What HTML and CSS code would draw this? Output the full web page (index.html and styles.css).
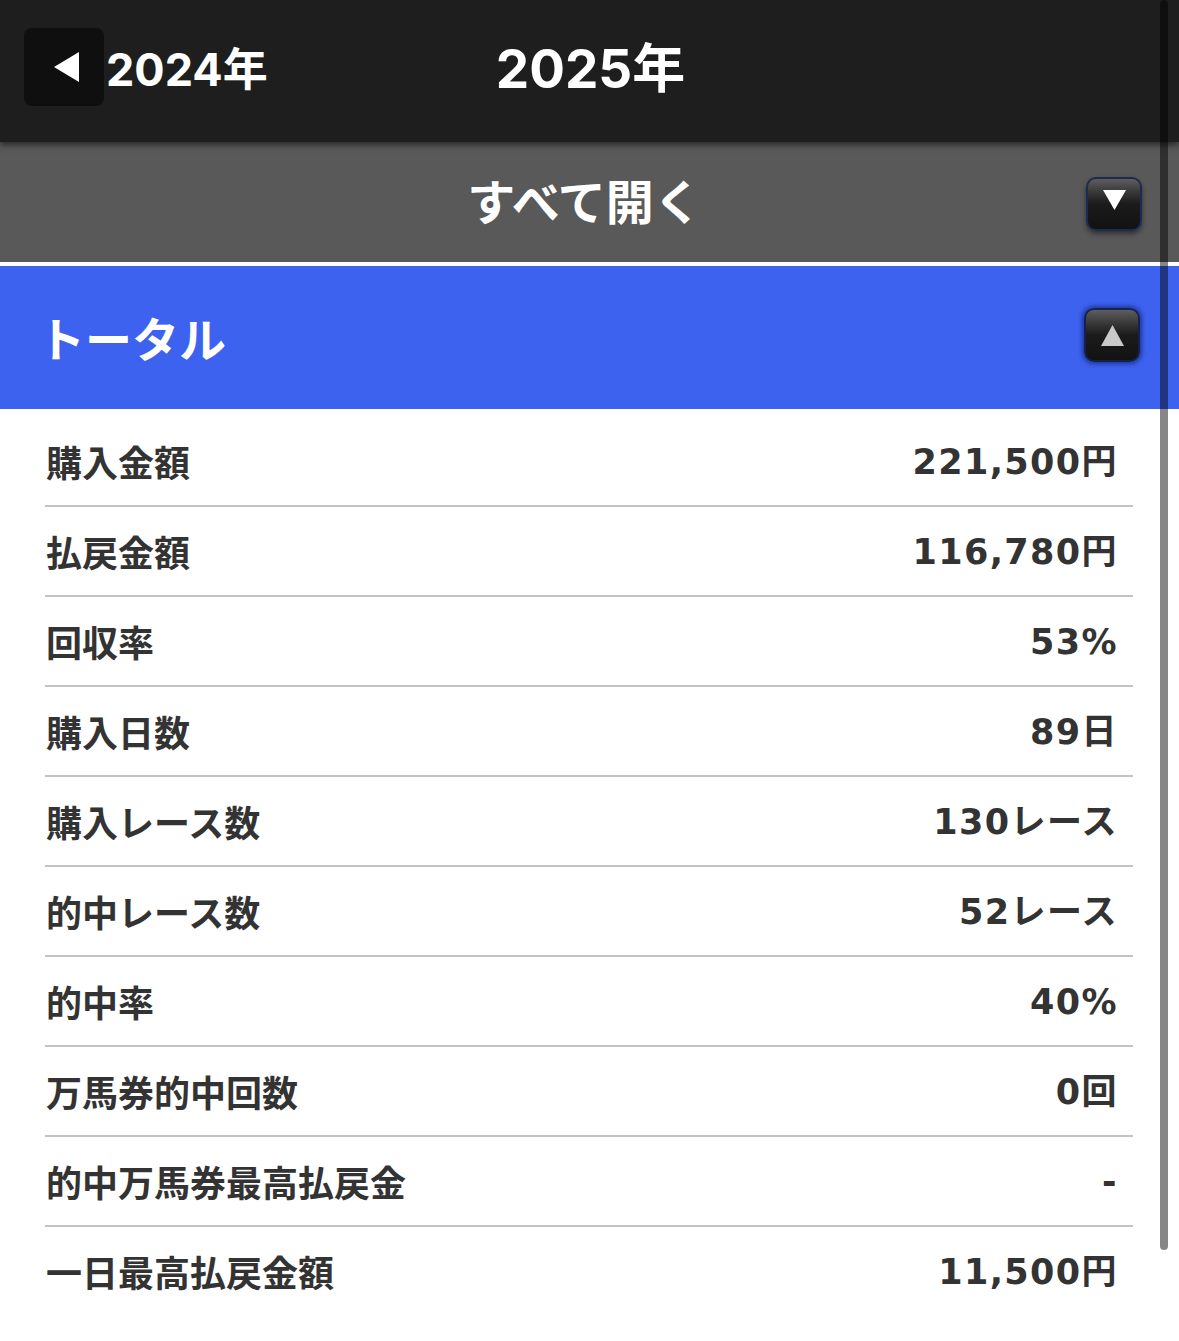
FILE: index.html
```html
<!DOCTYPE html>
<html lang="ja">
<head>
<meta charset="utf-8">
<title>収支 2025年</title>
<link rel="stylesheet" href="styles.css">
</head>
<body>
<div class="page">
  <header class="topbar">
    <div class="prev">
      <button class="back-btn" aria-label="前の年">
        <svg width="25" height="30" viewBox="0 0 25 30"><polygon points="0,15 25,0 25,30" fill="#fff"/></svg>
      </button>
      <span class="prev-year">2024年</span>
    </div>
    <h1 class="year">2025年</h1>
    <div></div>
  </header>

  <div class="expand-bar">
    <span class="expand-label">すべて開く</span>
    <span class="toggle toggle-down">
      <svg width="23" height="20" viewBox="0 0 23 20"><polygon points="0,0 23,0 11.5,20" fill="#fff"/></svg>
    </span>
  </div>

  <div class="section-head">
    <h2 class="section-title">トータル</h2>
    <span class="toggle toggle-up">
      <svg width="23" height="21" viewBox="0 0 23 21"><polygon points="11.5,0 23,21 0,21" fill="#c9c9c9"/></svg>
    </span>
  </div>

  <ul class="stats">
    <li class="row"><span class="label">購入金額</span><span class="value">221,500円</span></li>
    <li class="row"><span class="label">払戻金額</span><span class="value">116,780円</span></li>
    <li class="row"><span class="label">回収率</span><span class="value">53%</span></li>
    <li class="row"><span class="label">購入日数</span><span class="value">89日</span></li>
    <li class="row"><span class="label">購入レース数</span><span class="value">130レース</span></li>
    <li class="row"><span class="label">的中レース数</span><span class="value">52レース</span></li>
    <li class="row"><span class="label">的中率</span><span class="value">40%</span></li>
    <li class="row"><span class="label">万馬券的中回数</span><span class="value">0回</span></li>
    <li class="row"><span class="label">的中万馬券最高払戻金</span><span class="value">-</span></li>
    <li class="row"><span class="label">一日最高払戻金額</span><span class="value">11,500円</span></li>
  </ul>

  <div class="scrollbar"></div>
</div>
</body>
</html>
```

FILE: styles.css
```css
html, body {
  margin: 0;
  padding: 0;
  background: #fff;
}

.page {
  position: relative;
  width: 1179px;
  min-height: 1341px;
  overflow: hidden;
  font-family: "Noto Sans CJK JP", sans-serif;
}

.topbar {
  position: relative;
  z-index: 2;
  height: 142px;
  background: #1e1e1e;
  display: grid;
  grid-template-columns: 1fr auto 1fr;
  align-items: center;
  box-shadow: 0 3px 6px rgba(0, 0, 0, 0.55);
}

.prev {
  display: flex;
  align-items: center;
  padding-left: 24px;
  margin-top: -9px;
}

.back-btn {
  width: 80px;
  height: 78px;
  border: 0;
  padding: 0 0 0 4px;
  border-radius: 8px;
  background: #0f0f0f;
  display: flex;
  align-items: center;
  justify-content: center;
}

.prev-year {
  margin-left: 2px;
  color: #fff;
  font-family: "Inter", "Noto Sans CJK JP", sans-serif;
  font-weight: 700;
  font-size: 45px;
  line-height: 1;
  margin-top: 6px;
}

.year {
  margin: 0;
  color: #fff;
  font-family: "Inter", "Noto Sans CJK JP", sans-serif;
  font-weight: 700;
  font-size: 53px;
  line-height: 1;
  margin-top: -4px;
  margin-left: 2px;
}

.expand-bar {
  position: relative;
  height: 120px;
  background: #595959;
  display: flex;
  align-items: center;
  justify-content: center;
}

.expand-label {
  color: #fff;
  font-weight: 700;
  font-size: 48px;
  line-height: 1;
  margin-left: -10px;
  margin-top: -6px;
}

.toggle {
  position: absolute;
  right: 37px;
  width: 52px;
  height: 50px;
  border-radius: 10px;
  display: flex;
  align-items: center;
  justify-content: center;
  background: linear-gradient(#5e5e5e 0%, #3a3a3a 25%, #1b1b1b 50%, #121212 100%);
}

.toggle-down {
  top: 35px;
  border: 2px solid #1d2b52;
  box-shadow: 0 3px 5px rgba(0, 0, 0, 0.45);
}

.toggle-down svg {
  margin-top: -8px;
}

.toggle-up {
  top: 42px;
  right: 39px;
  border: 2px solid #14224f;
  box-shadow: 0 0 4px 2px rgba(10, 20, 80, 0.55);
}

.section-head {
  position: relative;
  height: 143px;
  border-top: 4px solid #fff;
  background: #3d62f0;
  display: flex;
  align-items: center;
  padding-left: 38px;
}

.section-title {
  margin: 0;
  color: #fff;
  font-weight: 700;
  font-size: 47px;
  line-height: 1;
  margin-top: -2px;
}

.stats {
  list-style: none;
  margin: 0;
  padding: 8px 46px 0 45px;
}

.row {
  height: 88px;
  border-bottom: 2px solid #c3c3c3;
  display: flex;
  align-items: center;
  justify-content: space-between;
  padding: 0 15px 0 1px;
  color: #333;
  font-weight: 700;
  font-size: 36px;
  line-height: 1;
}

.row:last-child {
  border-bottom: 0;
}

.label {
  font-family: "Noto Sans CJK JP", sans-serif;
}

.value {
  font-family: "DejaVu Sans", "Noto Sans CJK JP", sans-serif;
  font-size: 35px;
  letter-spacing: 1.4px;
  margin-top: 3px;
}

.scrollbar {
  position: absolute;
  z-index: 3;
  top: 0;
  left: 1160px;
  width: 8px;
  height: 1250px;
  border-radius: 4px;
  background: rgba(0, 0, 0, 0.47);
}
```
